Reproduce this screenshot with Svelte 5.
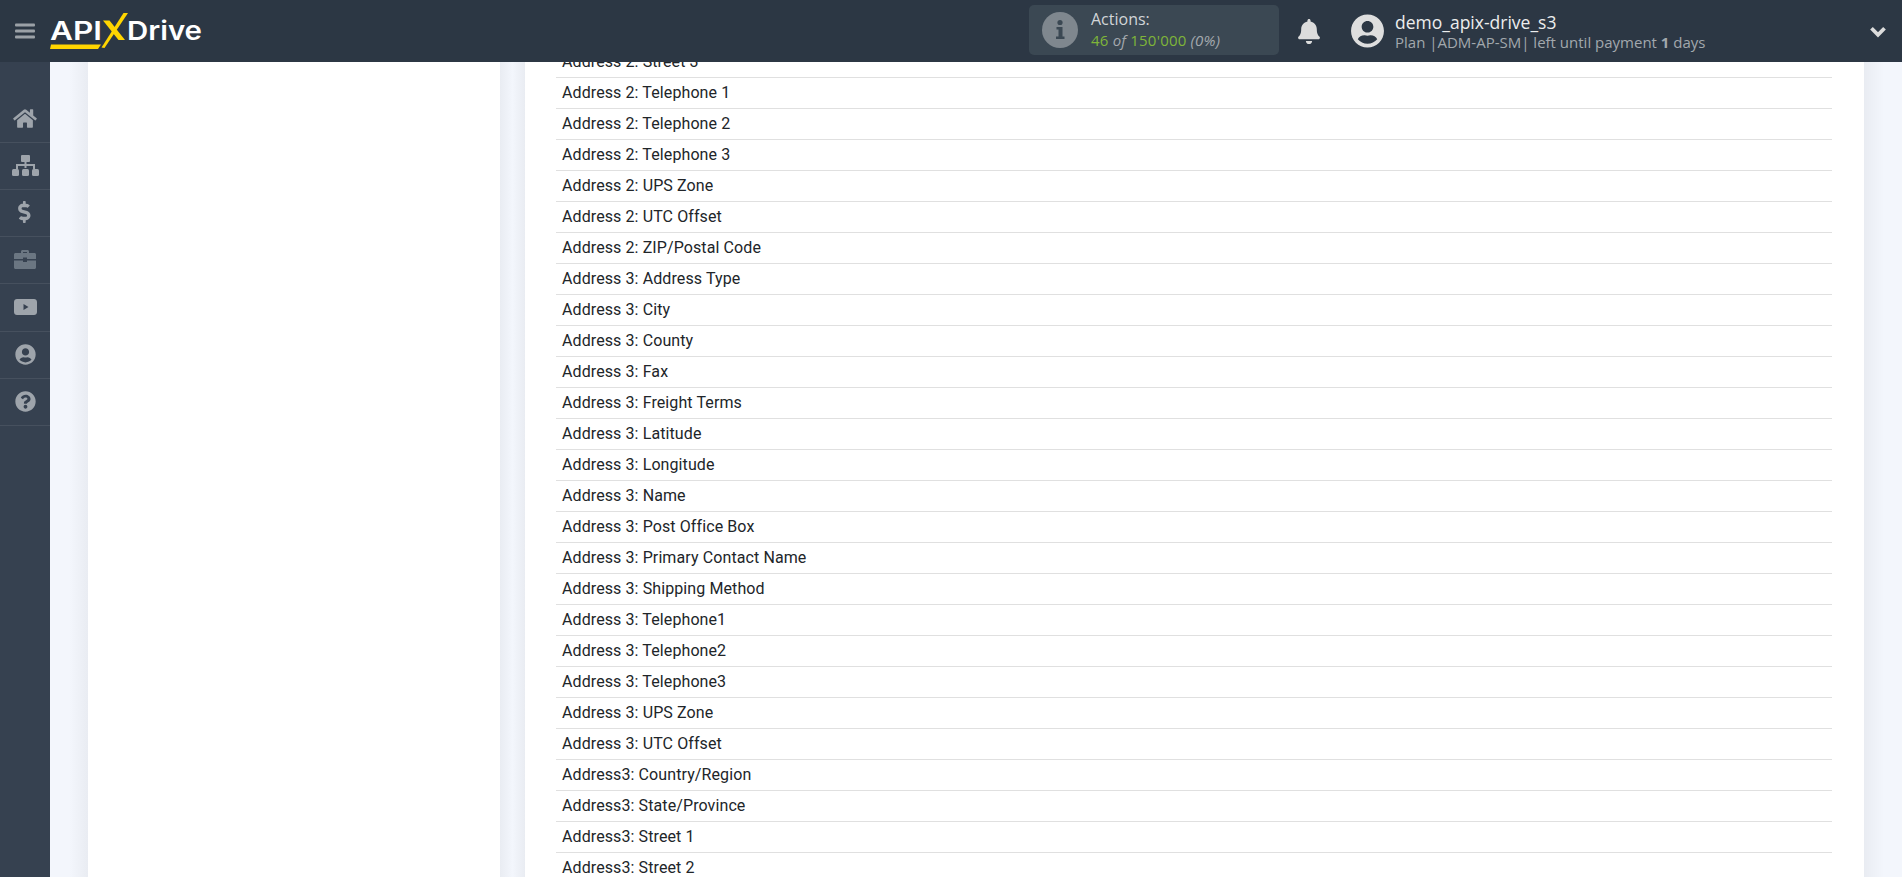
<script lang="ts">
  const rows = [
    'Address 2: Street 3',
    'Address 2: Telephone 1',
    'Address 2: Telephone 2',
    'Address 2: Telephone 3',
    'Address 2: UPS Zone',
    'Address 2: UTC Offset',
    'Address 2: ZIP/Postal Code',
    'Address 3: Address Type',
    'Address 3: City',
    'Address 3: County',
    'Address 3: Fax',
    'Address 3: Freight Terms',
    'Address 3: Latitude',
    'Address 3: Longitude',
    'Address 3: Name',
    'Address 3: Post Office Box',
    'Address 3: Primary Contact Name',
    'Address 3: Shipping Method',
    'Address 3: Telephone1',
    'Address 3: Telephone2',
    'Address 3: Telephone3',
    'Address 3: UPS Zone',
    'Address 3: UTC Offset',
    'Address3: Country/Region',
    'Address3: State/Province',
    'Address3: Street 1',
    'Address3: Street 2'
  ];

  const USER = 'M248 8C111 8 0 119 0 256s111 248 248 248 248-111 248-248S385 8 248 8zm0 96c48.6 0 88 39.4 88 88s-39.4 88-88 88-88-39.4-88-88 39.4-88 88-88zm0 344c-58.7 0-111.3-26.6-146.5-68.2 18.8-35.4 55.6-59.8 98.5-59.8 2.4 0 4.8.4 7.1 1.1 13 4.2 26.6 6.9 40.9 6.9 14.3 0 28-2.7 40.9-6.9 2.3-.7 4.7-1.1 7.1-1.1 42.9 0 79.7 24.4 98.5 59.8C359.3 421.4 306.7 448 248 448z';
</script>

<div class="page">
  <header class="top">
    <div class="brand">
      <svg class="burger" viewBox="0 0 20 16" width="20" height="16" aria-hidden="true">
        <rect y="0.5" width="20" height="3" rx="1" />
        <rect y="6.5" width="20" height="3" rx="1" />
        <rect y="12.5" width="20" height="3" rx="1" />
      </svg>
      <svg class="logo" viewBox="0 0 154 38" width="154" height="38" aria-label="ApiX Drive">
        <text x="0" y="27" textLength="52" lengthAdjust="spacingAndGlyphs">API</text>
        <text x="77" y="27" textLength="75" lengthAdjust="spacingAndGlyphs">Drive</text>
        <path class="gold" d="M53 7.5h6.5L75 27h-6.500z" />
        <path class="gold" d="M78 0h-4.500L51.500 34.500l3 .5z" />
        <path class="gold" d="M1 31.500h50l-3 4.500H0z" />
      </svg>
    </div>

    <div class="stats">
      <div class="actions">
        <svg class="info" viewBox="0 0 36 36" width="36" height="36" aria-hidden="true">
          <circle cx="18" cy="18" r="18" />
          <circle class="ink" cx="18" cy="10.500" r="2.600" />
          <path class="ink" d="M14.500 15h6v9.500h2v2.500h-8.500v-2.500h2.500v-7h-2z" />
        </svg>
        <div class="actions-text">
          <span class="a-label">Actions:</span>
          <span class="a-value"><b>46</b> <i>of</i> <b>150'000</b> <i>(0%)</i></span>
        </div>
      </div>

      <svg class="bell" viewBox="0 0 448 512" width="22" height="25" aria-hidden="true">
        <path d="M224 512c35.32 0 63.97-28.65 63.97-64H160.03c0 35.35 28.65 64 63.97 64zm215.39-149.71c-19.32-20.76-55.47-51.99-55.47-154.29 0-77.7-54.48-139.9-127.94-155.16V32c0-17.67-14.32-32-31.98-32s-31.98 14.33-31.98 32v20.84C118.56 68.1 64.08 130.3 64.08 208c0 102.3-36.15 133.53-55.47 154.29-6 6.45-8.66 14.16-8.61 21.71.11 16.4 12.98 32 32.1 32h383.8c19.12 0 32-15.6 32.1-32 .05-7.55-2.61-15.27-8.61-21.71z" />
      </svg>

      <svg class="avatar" viewBox="0 0 496 512" width="33" height="34" aria-hidden="true">
        <path d={USER} />
      </svg>

      <div class="account">
        <span class="acc-name">demo_apix-drive_s3</span>
        <span class="acc-plan">Plan |ADM-AP-SM| left until payment <b>1</b> days</span>
      </div>

      <svg class="chev" viewBox="0 0 16 12" width="18" height="13" aria-hidden="true">
        <path d="M2 3l6 6 6-6" />
      </svg>
    </div>
  </header>

  <div class="body">
    <nav class="side">
      <div class="item">
        <svg viewBox="0 0 576 512" width="24" height="21" aria-hidden="true">
          <path d="M280.37 148.26L96 300.11V464a16 16 0 0 0 16 16l112.06-.29a16 16 0 0 0 15.92-16V368a16 16 0 0 1 16-16h64a16 16 0 0 1 16 16v95.64a16 16 0 0 0 16 16.05L464 480a16 16 0 0 0 16-16V300L295.67 148.26a12.19 12.19 0 0 0-15.3 0zM571.6 251.47L488 182.56V44.05a12 12 0 0 0-12-12h-56a12 12 0 0 0-12 12v72.61L318.47 43a48 48 0 0 0-61 0L4.34 251.47a12 12 0 0 0-1.6 16.9l25.5 31A12 12 0 0 0 45.15 301l235.22-193.74a12.19 12.19 0 0 1 15.3 0L530.9 301a12 12 0 0 0 16.9-1.6l25.5-31a12 12 0 0 0-1.7-16.93z" />
        </svg>
      </div>
      <div class="item">
        <svg viewBox="0 0 27 21" width="27" height="21" aria-hidden="true">
          <rect x="9" y="0" width="9" height="7" rx="1" />
          <rect x="12.500" y="7" width="2" height="6" />
          <rect x="4" y="9" width="19" height="2" />
          <rect x="4" y="9" width="2" height="5" />
          <rect x="21" y="9" width="2" height="5" />
          <rect x="0" y="14" width="7" height="7" rx="1.500" />
          <rect x="10" y="14" width="7" height="7" rx="1.500" />
          <rect x="20" y="14" width="7" height="7" rx="1.500" />
        </svg>
      </div>
      <div class="item">
        <svg viewBox="0 0 320 512" width="14" height="22" aria-hidden="true">
          <path d="M209.2 233.4l-108-31.6C88.7 198.2 80 186.5 80 173.5c0-16.3 13.2-29.5 29.5-29.5h66.3c12.2 0 24.2 3.7 34.2 10.5 6.1 4.1 14.3 3.1 19.5-2l34.8-34c7.1-6.9 6.1-18.4-1.8-24.5C238 74.8 207.4 64.1 176 64V16c0-8.8-7.2-16-16-16h-32c-8.8 0-16 7.2-16 16v48h-2.5C45.8 64-5.4 118.7.5 183.6c4.2 46.1 39.4 83.6 83.8 96.6l102.5 30c12.5 3.7 21.2 15.3 21.2 28.3 0 16.3-13.2 29.5-29.5 29.5h-66.3C100 368 88 364.3 78 357.5c-6.1-4.1-14.3-3.1-19.5 2l-34.8 34c-7.1 6.9-6.1 18.4 1.8 24.5 24.5 19.2 55.1 29.9 86.5 30v48c0 8.8 7.2 16 16 16h32c8.8 0 16-7.200 16-16v-48.200c46.600-.9 90.300-28.600 105.700-72.700 21.500-61.600-14.600-124.800-72.500-141.700z" />
        </svg>
      </div>
      <div class="item dim">
        <svg viewBox="0 0 22 19" width="22" height="19" aria-hidden="true">
          <path d="M7 3V1.500C7 .7 7.700 0 8.500 0h5C14.300 0 15 .7 15 1.500V3h5.500c.8 0 1.500.7 1.500 1.500V9H13V7.500H9V9H0V4.500C0 3.700.7 3 1.500 3zm2 0h4V2H9z" />
          <path d="M0 10.500h9V12h4v-1.500h9v7c0 .8-.7 1.500-1.500 1.500h-19C.7 19 0 18.300 0 17.500z" />
        </svg>
      </div>
      <div class="item tall">
        <svg viewBox="0 0 23 16" width="23" height="16" aria-hidden="true">
          <path fill-rule="evenodd" d="M3 0h17c1.700 0 3 1.300 3 3v10c0 1.700-1.300 3-3 3H3c-1.700 0-3-1.300-3-3V3c0-1.700 1.300-3 3-3zm6.500 5v6l5-3z" />
        </svg>
      </div>
      <div class="item">
        <svg viewBox="0 0 496 512" width="21" height="21" aria-hidden="true">
          <path d={USER} />
        </svg>
      </div>
      <div class="item">
        <svg viewBox="0 0 512 512" width="21" height="21" aria-hidden="true">
          <path d="M504 256c0 136.997-111.043 248-248 248S8 392.997 8 256C8 119.083 119.043 8 256 8s248 111.083 248 248zM262.655 90c-54.497 0-89.255 22.957-116.549 63.758-3.536 5.286-2.353 12.415 2.715 16.258l34.699 26.31c5.205 3.947 12.621 3.008 16.665-2.122 17.864-22.658 30.113-35.797 57.303-35.797 20.429 0 45.698 13.148 45.698 32.958 0 14.976-12.363 22.667-32.534 33.976C247.128 238.528 216 254.941 216 296v4c0 6.627 5.373 12 12 12h56c6.627 0 12-5.373 12-12v-1.333c0-28.462 83.186-29.647 83.186-106.667 0-58.002-60.165-102-116.531-102zM256 338c-25.365 0-46 20.635-46 46 0 25.364 20.635 46 46 46s46-20.636 46-46c0-25.365-20.635-46-46-46z" />
        </svg>
      </div>
    </nav>

    <main class="content">
      <section class="card left"></section>
      <div class="gutter"></div>
      <section class="card right">
        <ul class="list">
          {#each rows as row (row)}
            <li>{row}</li>
          {/each}
        </ul>
      </section>
    </main>
  </div>
</div>

<style>
  :global(body) {
    margin: 0;
    background: #f3f6fc;
  }

  .page {
    height: 877px;
    overflow: hidden;
    display: flex;
    flex-direction: column;
    font-family: Roboto, sans-serif;
  }

  .top {
    height: 62px;
    flex: none;
    background: #2c3744;
    display: flex;
    align-items: center;
    position: relative;
    z-index: 2;
  }

  .brand {
    display: flex;
    align-items: center;
    width: 1029px;
    flex: none;
    padding-left: 15px;
    box-sizing: border-box;
  }
  .burger { fill: #9ba1a7; margin-right: 15px; }
  .logo { margin-top: 1px; }
  .logo text {
    font-family: Inter, sans-serif;
    font-weight: 600;
    font-size: 26px;
    fill: #fff;
  }
  .gold { fill: #ffd500; }

  .stats {
    display: flex;
    align-items: center;
    flex: 1;
    font-family: "Open Sans", sans-serif;
  }
  .actions {
    width: 250px;
    height: 50px;
    margin-bottom: 2px;
    box-sizing: border-box;
    padding-left: 13px;
    background: #3b4853;
    border-radius: 5px;
    display: flex;
    align-items: center;
    gap: 13px;
  }
  .info circle { fill: #7f878e; }
  .info .ink, .info circle.ink { fill: #3b4853; }
  .actions-text {
    display: flex;
    flex-direction: column;
    line-height: 21px;
    margin-top: -1px;
  }
  .a-label { font-size: 16px; color: #d2d5d8; }
  .a-value { font-size: 15px; letter-spacing: 0.2px; color: #a4a9ae; }
  .a-value b { font-weight: 400; color: #7fb539; }

  .bell { fill: #dcdcdc; margin-left: 19px; }
  .avatar { fill: #dedede; margin-left: 31px; }
  .account {
    display: flex;
    flex-direction: column;
    margin-left: 11px;
    width: 474px;
  }
  .acc-name { font-size: 17.500px; line-height: 22px; color: #eceded; }
  .acc-plan { font-size: 15px; line-height: 19px; color: #a2a8ad; }
  .acc-plan b { font-weight: 700; }
  .chev { fill: none; stroke: #dcdcdc; stroke-width: 3.500; }

  .body {
    flex: 1;
    display: flex;
    min-height: 0;
  }

  .side {
    width: 50px;
    flex: none;
    background: #364150;
    padding-top: 34px;
    box-sizing: border-box;
  }
  .item {
    height: 47px;
    padding-bottom: 2px;
    border-bottom: 1px solid #46505e;
    box-sizing: border-box;
    display: flex;
    align-items: center;
    justify-content: center;
  }
  .item.tall { height: 48px; }
  .item svg { fill: #9ea4ab; }
  .item.dim svg { fill: #6b7682; }

  .content {
    flex: 1;
    display: flex;
    overflow: hidden;
    padding: 0 38px;
    background: linear-gradient(to right, #f3f6fc 0, #f3f6fc 20px, #e9ecf2 38px, transparent 38px) no-repeat left / 38px 100%,
      linear-gradient(to right, #e9ecf2, #f3f6fc 20px) no-repeat right / 38px 100%,
      #f3f6fc;
  }

  .card {
    background: #fff;
    flex: none;
  }
  .left { width: 412px; }
  .gutter {
    width: 25px;
    flex: none;
    background: linear-gradient(to right, #e9ecf2, #f3f6fc 50%, #e9ecf2);
  }
  .right {
    width: 1339px;
    padding: 0 32px 0 31px;
    box-sizing: border-box;
  }

  .list {
    list-style: none;
    margin: -15px 0 0;
    padding: 0;
  }
  .list li {
    height: 31px;
    box-sizing: border-box;
    border-bottom: 1px solid #e0e0e0;
    padding-left: 6px;
    font-size: 16px;
    letter-spacing: 0.1px;
    line-height: 30px;
    color: #212529;
  }
</style>
